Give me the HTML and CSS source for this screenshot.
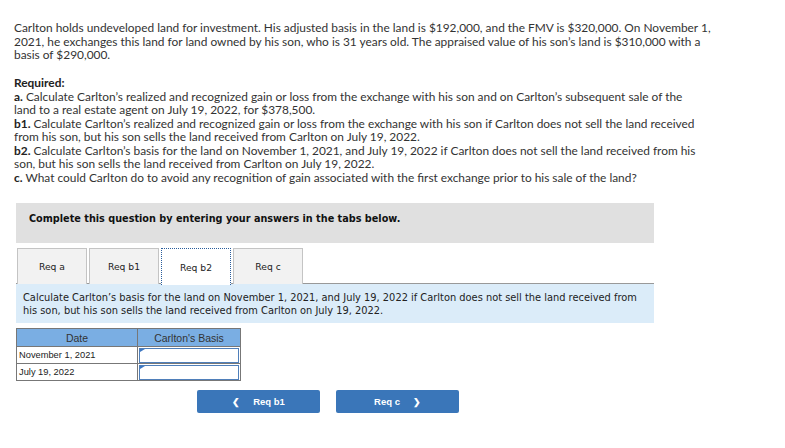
FILE: index.html
```html
<!DOCTYPE html>
<html>
<head>
<meta charset="utf-8">
<link rel="stylesheet" href="styles.css">
</head>
<body>
<div class="page">
  <p class="q">Carlton holds undeveloped land for investment. His adjusted basis in the land is $192,000, and the FMV is $320,000. On November 1,<br>2021, he exchanges this land for land owned by his son, who is 31 years old. The appraised value of his son’s land is $310,000 with a<br>basis of $290,000.</p>
  <p class="q req"><b>Required:</b><br>
  <b>a.</b> Calculate Carlton’s realized and recognized gain or loss from the exchange with his son and on Carlton’s subsequent sale of the<br>land to a real estate agent on July 19, 2022, for $378,500.<br>
  <b>b1.</b> Calculate Carlton’s realized and recognized gain or loss from the exchange with his son if Carlton does not sell the land received<br>from his son, but his son sells the land received from Carlton on July 19, 2022.<br>
  <b>b2.</b> Calculate Carlton’s basis for the land on November 1, 2021, and July 19, 2022 if Carlton does not sell the land received from his<br>son, but his son sells the land received from Carlton on July 19, 2022.<br>
  <b>c.</b> What could Carlton do to avoid any recognition of gain associated with the first exchange prior to his sale of the land?</p>

  <div class="panel">
    <div class="banner">Complete this question by entering your answers in the tabs below.</div>
    <div class="tabs">
      <div class="tab">Req a</div>
      <div class="tab">Req b1</div>
      <div class="tab active">Req b2</div>
      <div class="tab">Req c</div>
    </div>
    <div class="info">Calculate Carlton’s basis for the land on November 1, 2021, and July 19, 2022 if Carlton does not sell the land received from<br>his son, but his son sells the land received from Carlton on July 19, 2022.</div>
    <table class="grid">
      <tr><th class="c1">Date</th><th class="c2">Carlton's Basis</th></tr>
      <tr><td class="c1">November 1, 2021</td><td class="inp"><div class="box"></div></td></tr>
      <tr><td class="c1">July 19, 2022</td><td class="inp"><div class="box"></div></td></tr>
    </table>
    <div class="nav">
      <div class="btn"><span class="chev">&#10094;</span>Req b1</div>
      <div class="btn">Req c<span class="chev r">&#10095;</span></div>
    </div>
  </div>
</div>
</body>
</html>
```

FILE: styles.css
```css
html, body { margin: 0; padding: 0; background: #fff; }
.page { padding: 21px 0 0 14px; width: 760px; }
.q {
  margin: 0;
  font-family: "Lato", "Open Sans", sans-serif;
  font-size: 11.9px;
  line-height: 13.5px;
  color: #333;
  white-space: nowrap;
}
.q b { font-weight: 700; color: #222; }
.req { margin-top: 14.5px; }
.panel { margin: 19px 0 0 2px; width: 638px; }
.banner {
  background: #e0e0e0;
  height: 40px;
  box-sizing: border-box;
  padding: 10px 0 0 13px;
  font-family: "DejaVu Sans", Verdana, sans-serif;
  font-weight: bold;
  font-size: 9.7px;
  line-height: 12px;
  color: #111;
}
.tabs { display: flex; gap: 2px; margin-top: 5px; padding-left: 1px; height: 35px; border-bottom: 1px solid #999; }
.tab {
  width: 68px; height: 35px;
  background: #f2f2f2;
  border: 1px solid #c4c4c4;
  border-bottom: none;
  display: flex; align-items: center; justify-content: center;
  font-family: "DejaVu Sans", Verdana, sans-serif;
  font-size: 9.2px;
  color: #222;
}
.tab.active {
  background: #fff;
  border: 1px dotted #2a5d9c;
  border-bottom: none;
  height: 36px; margin-bottom: -1px;
  position: relative; z-index: 1;
}
.info {
  background: #dbecf9;
  padding: 8px 7px 7px;
  height: 24px;
  font-family: "DejaVu Sans", Verdana, sans-serif;
  font-size: 9.85px;
  line-height: 12.5px;
  color: #222;
  white-space: nowrap;
}
.grid {
  margin-top: 5px;
  border-collapse: collapse;
  font-family: "Liberation Sans", Arial, sans-serif;
  font-size: 9.3px;
  color: #222;
}
.grid th {
  background: #7aaee3;
  border: 1px solid #777;
  font-weight: normal;
  font-size: 10.5px;
  height: 17px; padding: 0;
  color: #333;
}
.grid td { border: 1px solid #777; height: 16px; padding: 0; }
.grid td.c1 { padding-left: 2px; }
.c1 { width: 118px; }
.c2 { width: 102px; }
.inp { position: relative; }
.box { height: 13px; border: 1px solid #4f7fba; margin: 0 1px; background: #fff; }
.inp::before {
  content: ""; position: absolute; left: 2px; top: 2px;
  border-left: 5px solid #3d77c2; border-bottom: 3px solid transparent;
}
.nav { display: flex; gap: 16px; margin: 9px 0 0 181px; }
.btn {
  width: 123px; height: 23px;
  background: #3a76b9;
  border-radius: 2px;
  display: flex; align-items: center; justify-content: center;
  font-family: "Liberation Sans", Arial, sans-serif;
  font-weight: bold;
  font-size: 9.5px;
  color: #fff;
}
.chev { font-size: 9px; font-weight: bold; margin-right: 13px; }
.chev.r { margin: 0 0 0 13px; }
```
